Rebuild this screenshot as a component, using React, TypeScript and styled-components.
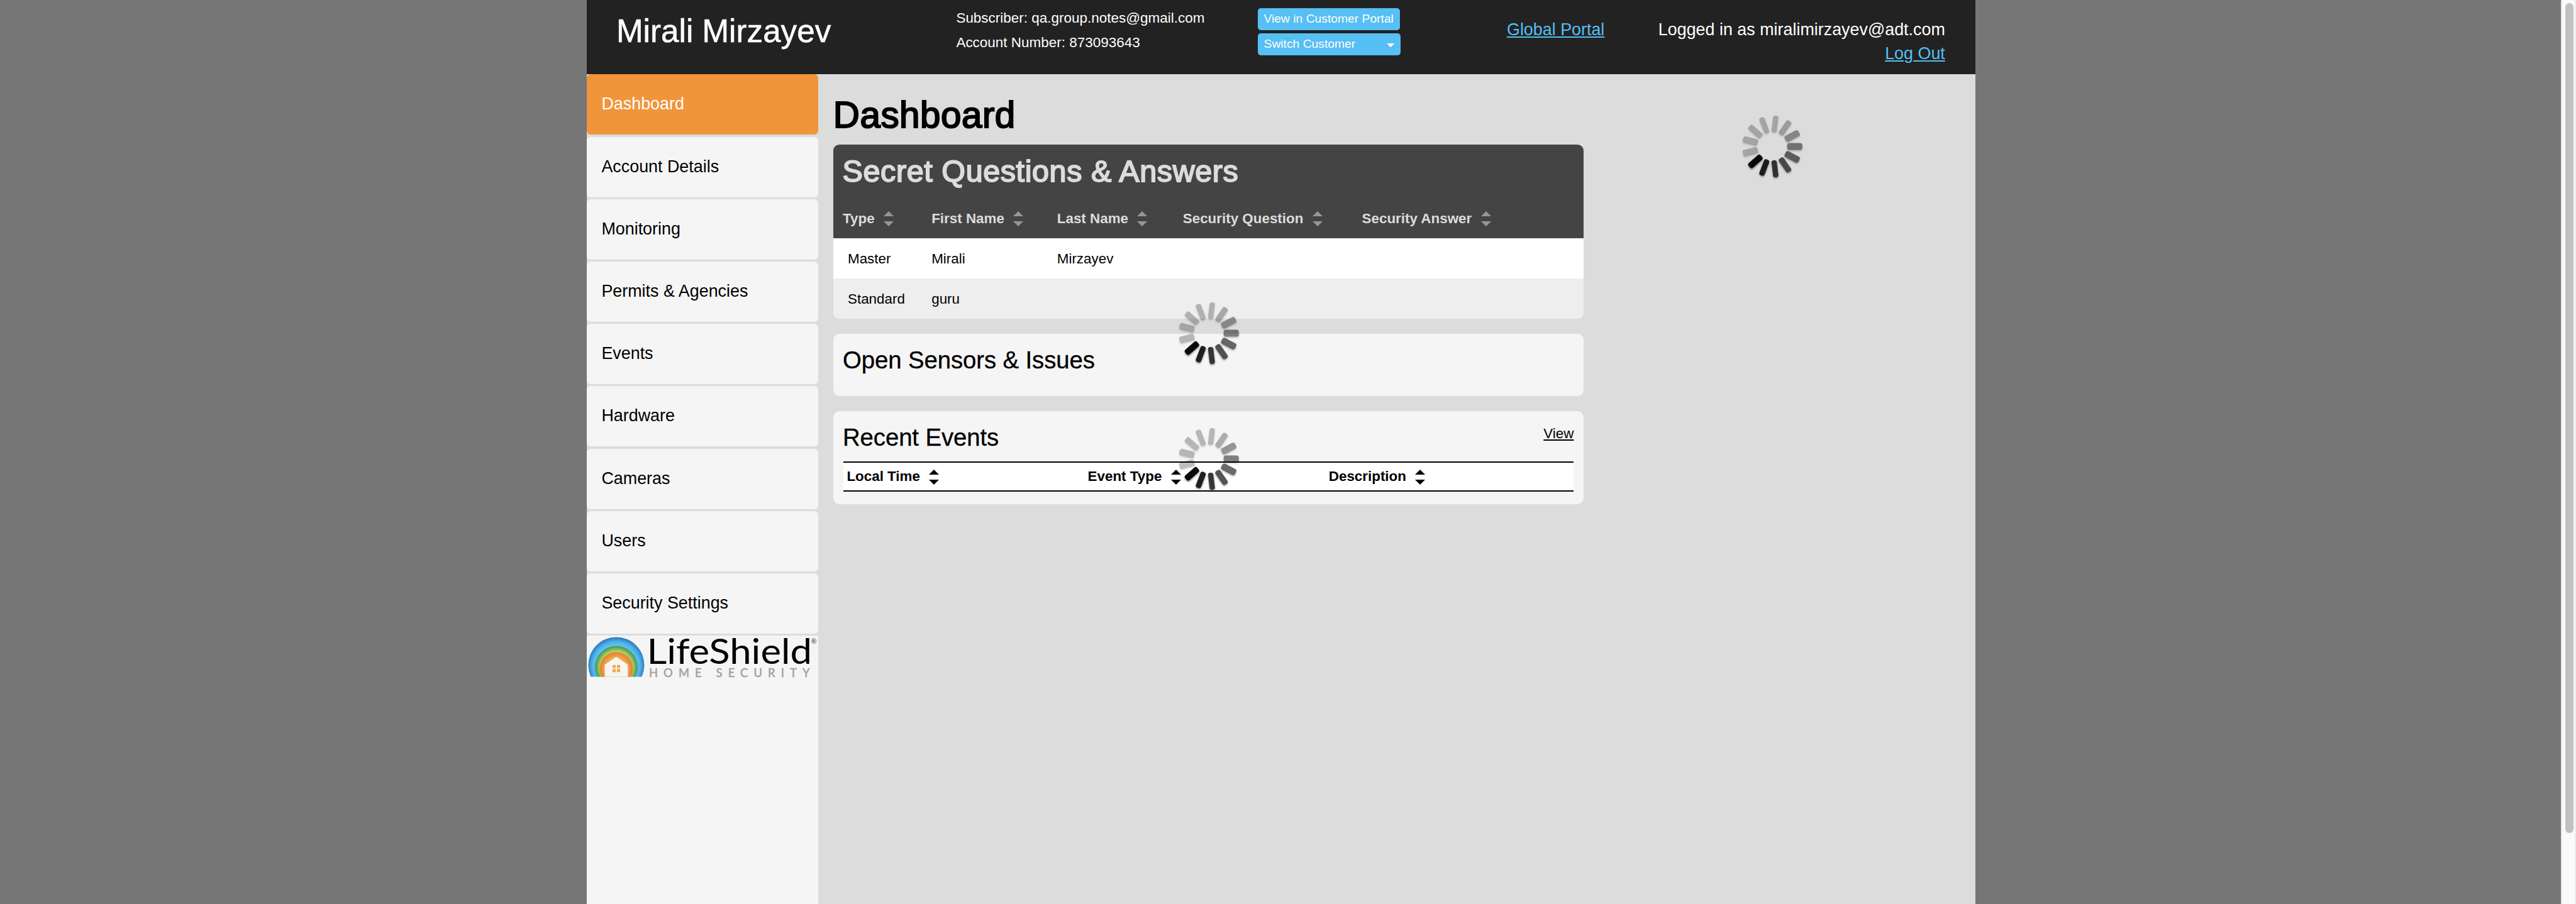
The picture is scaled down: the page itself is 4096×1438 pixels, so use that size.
import React from 'react';
import styled, { createGlobalStyle } from 'styled-components';

const SCALE = 0.8;
const u = (n: number) => `${+(n * SCALE).toFixed(3)}px`;

const GlobalStyle = createGlobalStyle`
  html, body { margin: 0; background: #767676; }
  body { font-family: "Liberation Sans", Arial, sans-serif; color: #000; overflow: hidden; }
  *, *::before, *::after { box-sizing: border-box; }
`;

const Screen = styled.div`
  display: flex;
  width: ${u(5120)};
  height: 1438px;
  background: #767676;
  overflow: hidden;
`;

const Backdrop = styled.div`
  flex: 1;
  padding-left: ${u(1166)};
`;

const Page = styled.div`
  display: flex;
  flex-direction: column;
  width: ${u(2760)};
  height: 100%;
  background: #dcdcdc;
`;

const ScrollTrack = styled.div`
  width: ${u(30)};
  height: 100%;
  padding: ${u(6)} 0 0 ${u(6)};
  background: #fafafa;
  border-left: 2px solid #e8e8e8;
  border-right: 2px solid #ededed;
`;

const ScrollThumb = styled.div`
  width: ${u(16)};
  height: ${u(1650)};
  border-radius: ${u(8)};
  background: #c1c1c1;
`;

const Header = styled.header`
  display: grid;
  grid-template-columns: ${u(734.5)} ${u(599.5)} ${u(495)} ${u(260)} 1fr;
  height: ${u(148)};
  background: #222;
  color: #fff;
  white-space: nowrap;
`;

const CustomerName = styled.div`
  padding: ${u(22)} 0 0 ${u(59)};
  font-size: ${u(64)};
  line-height: ${u(80)};
  -webkit-text-stroke: ${u(0.7)} currentColor;
`;

const AccountInfo = styled.div`
  padding-top: ${u(13)};
  font-size: ${u(28.1)};
  line-height: ${u(48)};
`;

const HeaderActions = styled.div`
  display: flex;
  flex-direction: column;
  align-items: flex-start;
  gap: ${u(6)};
  padding-top: ${u(16)};
`;

const ActionButton = styled.button<{ $width: number }>`
  display: flex;
  align-items: center;
  justify-content: space-between;
  width: ${(p) => u(p.$width)};
  height: ${u(44)};
  padding: 0 ${u(12)} ${u(1)};
  border: 0;
  border-radius: ${u(6)};
  background: #56bff3;
  color: #fff;
  font: ${u(24.1)} / ${u(42)} "Liberation Sans", Arial, sans-serif;
  white-space: nowrap;
`;

const Caret = styled.span`
  width: ${u(16)};
  height: ${u(8)};
  margin-top: ${u(5)};
  background: #fff;
  clip-path: polygon(0 0, 100% 0, 50% 100%);
`;

const HeaderColumn = styled.div<{ $end?: boolean }>`
  padding-top: ${u(35)};
  padding-right: ${(p) => (p.$end ? u(60) : '0')};
  text-align: ${(p) => (p.$end ? 'right' : 'left')};
  font-size: ${u(33.6)};
  line-height: ${u(48)};
`;

const Link = styled.a<{ $color: string }>`
  color: ${(p) => p.$color};
  text-decoration: underline;
  text-decoration-thickness: 2px;
  text-underline-offset: ${u(2)};
`;

const Body = styled.div`
  display: flex;
  flex: 1;
  min-height: 0;
`;

const Sidebar = styled.aside`
  display: flex;
  flex-direction: column;
  width: ${u(460)};
`;

const Nav = styled.nav`
  display: flex;
  flex-direction: column;
  gap: ${u(4)};
  padding-bottom: ${u(4)};
`;

const NavItem = styled.a<{ $active?: boolean }>`
  height: ${u(120)};
  padding-left: ${u(29.5)};
  border-radius: ${u(8)};
  background: ${(p) => (p.$active ? '#f0953a' : '#f5f5f5')};
  color: ${(p) => (p.$active ? '#fff' : '#000')};
  font-size: ${u(33.6)};
  line-height: ${u(119)};
`;

const SidebarFooter = styled.div`
  flex: 1;
  background: #f5f5f5;
  svg { display: block; overflow: visible; }
`;

const Main = styled.main`
  display: flex;
  flex-direction: column;
  width: ${u(1492)};
  margin-left: ${u(30)};
`;

const PageTitle = styled.h1`
  height: ${u(140)};
  margin: 0;
  padding-top: ${u(36)};
  font-size: ${u(73)};
  font-weight: 400;
  line-height: ${u(90)};
  letter-spacing: ${u(0.6)};
  -webkit-text-stroke: ${u(2.6)} currentColor;
`;

const Card = styled.section<{ $height: number }>`
  position: relative;
  height: ${(p) => u(p.$height)};
  margin-bottom: ${u(30)};
  border-radius: ${u(12)};
  background: #f5f5f5;
`;

const QuestionsHead = styled.div`
  height: ${u(186)};
  border-radius: ${u(12)} ${u(12)} 0 0;
  background: #444;
  color: #dcdcdc;
`;

const QuestionsTitle = styled.h2`
  height: ${u(112)};
  margin: 0;
  padding: ${u(12)} 0 0 ${u(18.5)};
  font-size: ${u(60.6)};
  font-weight: 400;
  line-height: ${u(80)};
  letter-spacing: ${u(0.75)};
  -webkit-text-stroke: ${u(2.4)} currentColor;
`;

const QuestionsGrid = styled.div`
  display: grid;
  grid-template-columns: ${u(195.5)} ${u(249.5)} ${u(250)} ${u(356)} 1fr;
  font-size: ${u(28)};
`;

const QuestionsHeadRow = styled(QuestionsGrid)`
  height: ${u(74)};
  padding-bottom: ${u(4)};
  line-height: ${u(69)};
`;

const QuestionsRow = styled(QuestionsGrid)<{ $alt?: boolean }>`
  height: ${u(80)};
  line-height: ${u(82)};
  background: ${(p) => (p.$alt ? '#eee' : '#fff')};
  border-radius: ${(p) => (p.$alt ? `0 0 ${u(12)} ${u(12)}` : '0')};
`;

const Cell = styled.div<{ $indent?: number }>`
  padding-left: ${(p) => u(p.$indent ?? 0)};
`;

const SortHeading = styled.div<{ $indent?: number }>`
  display: flex;
  align-items: center;
  gap: ${u(18)};
  padding-left: ${(p) => u(p.$indent ?? 0)};
  font-weight: 700;
  white-space: nowrap;
`;

const SortMark = styled.span<{ $color: string }>`
  display: flex;
  flex-direction: column;
  gap: ${u(10)};
  &::before, &::after {
    content: "";
    border: ${u(10)} solid transparent;
  }
  &::before { border-top: 0; border-bottom-color: ${(p) => p.$color}; }
  &::after { border-bottom: 0; border-top-color: ${(p) => p.$color}; }
`;

const CardHead = styled.div`
  display: flex;
  justify-content: space-between;
  height: ${u(100)};
  padding: ${u(17)} ${u(20)} 0 ${u(19)};
`;

const CardTitle = styled.h3`
  margin: 0;
  font-size: ${u(48)};
  font-weight: 400;
  line-height: ${u(69)};
  letter-spacing: ${u(-0.15)};
  -webkit-text-stroke: ${u(0.4)} currentColor;
`;

const ViewLink = styled.div`
  font-size: ${u(28)};
  line-height: ${u(54)};
`;

const EventsHead = styled.div`
  display: grid;
  grid-template-columns: ${u(479)} ${u(479)} 1fr;
  height: ${u(60)};
  margin: 0 ${u(20)};
  border: solid #000;
  border-width: 2px 0;
  background: #fff;
  font-size: ${u(28)};
  line-height: ${u(56)};
`;

const SpinnerBox = styled.div<{ $x: number; $y: number }>`
  position: absolute;
  left: ${(p) => u(p.$x - 75)};
  top: ${(p) => u(p.$y - 75)};
  width: ${u(150)};
  height: ${u(150)};
  svg { display: block; overflow: visible; }
`;

const SpinnerBar = styled.g`
  filter: drop-shadow(0 2px 2px rgba(0, 0, 0, 0.55));
`;

const SidePanel = styled.div`
  position: relative;
  flex: 1;
`;

const barOpacity = [0.48, 0.39, 0.29, 0.25, 0.25, 0.25, 0.25, 0.25, 0.96, 0.87, 0.78, 0.67, 0.58];

function Spinner({ x, y }: { x: number; y: number }) {
  return (
    <SpinnerBox $x={x} $y={y}>
      <svg width="100%" height="100%" viewBox="-75 -75 150 150">
        {barOpacity.map((opacity, i) => {
          const angle = (i * 360) / 13;
          const flat = Math.cos((angle * Math.PI) / 180) ** 2;
          const length = 34 - 4 * flat;
          const width = 10.5 + 3.5 * flat;
          return (
            <SpinnerBar key={i} opacity={opacity}>
              <rect
                transform={`rotate(${-angle})`}
                x={44.7 - length / 2}
                y={-width / 2}
                width={length}
                height={width}
                rx={4.4}
              />
            </SpinnerBar>
          );
        })}
      </svg>
    </SpinnerBox>
  );
}

function Logo() {
  return (
    <svg width={460 * SCALE} height={(260 / 3) * SCALE} viewBox="48 252 1380 260">
      <defs>
        <radialGradient id="sky" gradientUnits="userSpaceOnUse" cx="224" cy="432" r="170">
          <stop offset="0.68" stopColor="#63c6f7" />
          <stop offset="0.84" stopColor="#4db3ec" />
          <stop offset="1" stopColor="#2d78b8" />
        </radialGradient>
        <radialGradient id="grass" gradientUnits="userSpaceOnUse" cx="224" cy="441" r="127">
          <stop offset="0.76" stopColor="#b1cf5f" />
          <stop offset="0.86" stopColor="#82b955" />
          <stop offset="1" stopColor="#3c9656" />
        </radialGradient>
        <radialGradient id="sun" gradientUnits="userSpaceOnUse" cx="224" cy="449" r="98">
          <stop offset="0.68" stopColor="#f2a93f" />
          <stop offset="1" stopColor="#e8793c" />
        </radialGradient>
        <clipPath id="ground"><rect x="48" y="252" width="400" height="246" /></clipPath>
      </defs>
      <g clipPath="url(#ground)">
        <circle cx="224" cy="428" r="167" fill="url(#sky)" />
        <circle cx="224" cy="441" r="127" fill="url(#grass)" />
        <circle cx="224" cy="449" r="98" fill="url(#sun)" />
        <path d="M224 379L293 425V500H155V425Z" fill="#f5f5f5" />
      </g>
      <path d="M202 427h19v18h-19zM228 427h19v18h-19zM202 452h19v18h-19zM228 452h19v18h-19z" fill="#f2a93f" />
      <text x="406" y="422" fontFamily="Lato, sans-serif" fontSize="209" textLength="985" lengthAdjust="spacingAndGlyphs">LifeShield</text>
      <text x="419" y="500" fontFamily="Lato, sans-serif" fontSize="69" textLength="958" fill="#a0a1a5" stroke="#a0a1a5" strokeWidth="2">HOME SECURITY</text>
      <text x="1385" y="299" fontFamily="Lato, sans-serif" fontSize="40" fill="#333">®</text>
    </svg>
  );
}

const navItems = [
  'Dashboard', 'Account Details', 'Monitoring', 'Permits & Agencies', 'Events',
  'Hardware', 'Cameras', 'Users', 'Security Settings',
];

export default function App() {
  return (
    <Screen>
      <GlobalStyle />
      <Backdrop>
        <Page>
          <Header>
            <CustomerName>Mirali Mirzayev</CustomerName>
            <AccountInfo>
              <div>Subscriber: qa.group.notes@gmail.com</div>
              <div>Account Number: 873093643</div>
            </AccountInfo>
            <HeaderActions>
              <ActionButton $width={282}>View in Customer Portal</ActionButton>
              <ActionButton $width={284}>Switch Customer<Caret /></ActionButton>
            </HeaderActions>
            <HeaderColumn><Link $color="#56bff3">Global Portal</Link></HeaderColumn>
            <HeaderColumn $end>
              <div>Logged in as miralimirzayev@adt.com</div>
              <Link $color="#56bff3">Log Out</Link>
            </HeaderColumn>
          </Header>
          <Body>
            <Sidebar>
              <Nav>
                {navItems.map((label, i) => (
                  <NavItem key={label} $active={i === 0}>{label}</NavItem>
                ))}
              </Nav>
              <SidebarFooter><Logo /></SidebarFooter>
            </Sidebar>
            <Main>
              <PageTitle>Dashboard</PageTitle>
              <Card $height={346}>
                <QuestionsHead>
                  <QuestionsTitle>Secret Questions &amp; Answers</QuestionsTitle>
                  <QuestionsHeadRow>
                    <SortHeading $indent={19}>Type<SortMark $color="#969696" /></SortHeading>
                    <SortHeading>First Name<SortMark $color="#969696" /></SortHeading>
                    <SortHeading>Last Name<SortMark $color="#969696" /></SortHeading>
                    <SortHeading>Security Question<SortMark $color="#969696" /></SortHeading>
                    <SortHeading>Security Answer<SortMark $color="#969696" /></SortHeading>
                  </QuestionsHeadRow>
                </QuestionsHead>
                <QuestionsRow>
                  <Cell $indent={29}>Master</Cell>
                  <Cell>Mirali</Cell>
                  <Cell>Mirzayev</Cell>
                </QuestionsRow>
                <QuestionsRow $alt>
                  <Cell $indent={29}>Standard</Cell>
                  <Cell>guru</Cell>
                </QuestionsRow>
              </Card>
              <Card $height={124}>
                <CardHead><CardTitle>Open Sensors &amp; Issues</CardTitle></CardHead>
                <Spinner x={746} y={-1} />
              </Card>
              <Card $height={184}>
                <CardHead>
                  <CardTitle>Recent Events</CardTitle>
                  <ViewLink><Link $color="#000">View</Link></ViewLink>
                </CardHead>
                <EventsHead>
                  <SortHeading $indent={7}>Local Time<SortMark $color="#000" /></SortHeading>
                  <SortHeading $indent={7}>Event Type<SortMark $color="#000" /></SortHeading>
                  <SortHeading $indent={7}>Description<SortMark $color="#000" /></SortHeading>
                </EventsHead>
                <Spinner x={746} y={95} />
              </Card>
            </Main>
            <SidePanel><Spinner x={374} y={143} /></SidePanel>
          </Body>
        </Page>
      </Backdrop>
      <ScrollTrack><ScrollThumb /></ScrollTrack>
    </Screen>
  );
}
